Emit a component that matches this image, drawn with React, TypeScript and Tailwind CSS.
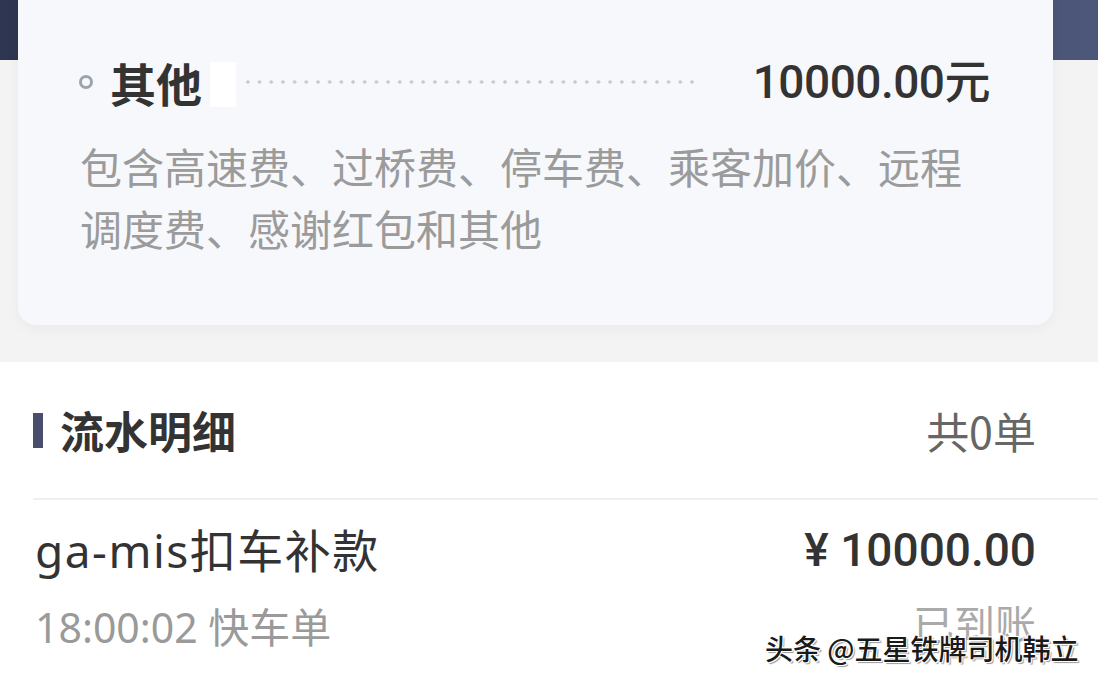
import React from "react";

const cjk = "font-['Noto_Sans_CJK_SC',sans-serif]";
const num = "font-['Roboto','Noto_Sans_CJK_SC',sans-serif]";
const latin = "font-['Noto_Sans','Noto_Sans_CJK_SC',sans-serif]";

export default function App() {
  return (
    <div className={`relative h-[685px] w-[1098px] overflow-hidden bg-white ${cjk}`}>
      {/* fee card */}
      <div className="relative bg-[#f3f3f4] pb-[37px]">
        <div className="absolute inset-x-0 top-0 h-[60px] bg-linear-to-r from-[#2e3550] to-[#4c5779]" />
        <div className="relative ml-[18px] mr-[45px] h-[325px] rounded-b-[18px] bg-[#f7f8fc] pl-[61px] pr-[63px] pt-[52px] shadow-[0_4px_14px_rgba(0,0,0,0.04)]">
          <div className="flex h-[60px] items-center">
            <span className="h-[14px] w-[14px] shrink-0 rounded-full border-[3px] border-[#9aa4ae]" />
            <span className="ml-[17px] text-[46px] font-bold leading-none text-[#333]">其他</span>
            <span className="ml-[8px] mt-[5px] h-[45px] w-[26px] shrink-0 bg-white" />
            <div className="ml-[6px] mr-[53px] h-[4px] flex-1 bg-[radial-gradient(circle,#c6cad1_1.5px,transparent_1.8px)] bg-[length:11.7px_4px] bg-repeat-x" />
            <span className={`${num} text-[46px] font-medium leading-none tracking-[-0.5px] text-[#333]`}>
              10000.00元
            </span>
          </div>
          <p className="mt-[23px] pl-[1px] text-[42px] leading-[62px] text-[#9b9b9b]">
            包含高速费、过桥费、停车费、乘客加价、远程调度费、感谢红包和其他
          </p>
        </div>
      </div>

      {/* records */}
      <div className="pt-[38px]">
        <div className="flex h-[60px] items-center justify-between pl-[33px] pr-[62px]">
          <div className="flex items-center">
            <span className="h-[35px] w-[10px] shrink-0 bg-[#4a4e6c]" />
            <span className="ml-[17px] text-[44px] font-bold leading-none text-[#333]">流水明细</span>
          </div>
          <span className="text-[43px] leading-none text-[#666]">共0单</span>
        </div>
        <div className="ml-[33px] mt-[38px] h-[2px] bg-[#efefef]" />

        <div className="pl-[35px] pr-[62px] pt-[22px]">
          <div className="flex h-[56px] items-center justify-between">
            <span className={`${latin} text-[46px] leading-none tracking-[1.5px] text-[#333]`}>ga-mis扣车补款</span>
            <span className={`${num} text-[46px] font-medium leading-none text-[#333]`}>¥ 10000.00</span>
          </div>
          <div className="mt-[21px] flex h-[56px] items-center justify-between">
            <span className={`${latin} text-[41px] leading-none text-[#9a9a9a]`}>18:00:02 快车单</span>
            <span className="-mt-[10px] text-[41px] leading-none text-[#aaa]">已到账</span>
          </div>
        </div>
      </div>

      {/* watermark */}
      <div className="absolute left-[765px] top-[634px] text-[28px] font-medium leading-none text-[#1a1a1a] [text-shadow:1px_1px_0_#fff,-1px_-1px_0_#fff,1px_-1px_0_#fff,-1px_1px_0_#fff,2px_2px_1px_rgba(0,0,0,0.4)]">
        头条 @五星铁牌司机韩立
      </div>
    </div>
  );
}
